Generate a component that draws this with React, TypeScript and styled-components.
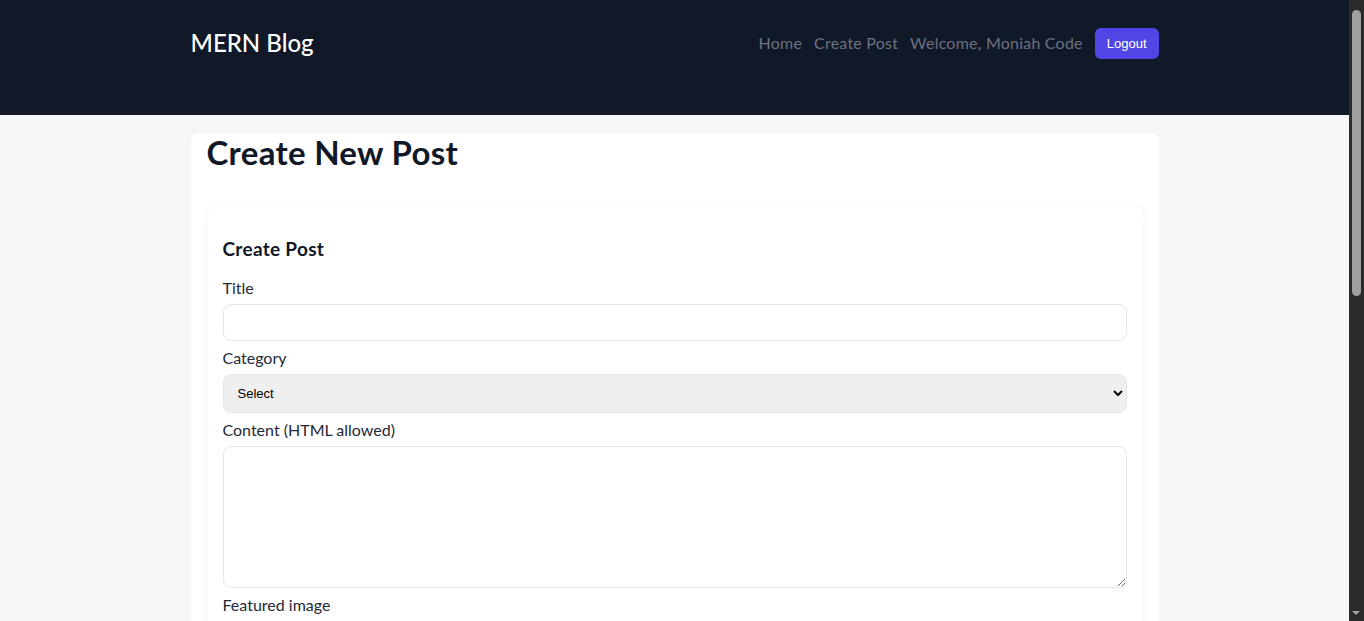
import React from "react";
import styled, { createGlobalStyle } from "styled-components";

const Global = createGlobalStyle`
  body {
    margin: 0;
    padding-right: 15px;
    background: #f5f6f8;
    font-family: Lato, "Open Sans", sans-serif;
    color: #111827;
  }
  * { box-sizing: border-box; }
`;

const ScrollTrack = styled.div`
  position: fixed;
  top: 0;
  right: 0;
  width: 15px;
  height: 100vh;
  background: #2b2b2b;
  z-index: 10;
`;

const ScrollThumb = styled.div`
  position: absolute;
  top: 10px;
  left: 3px;
  width: 9px;
  height: 286px;
  border-radius: 5px;
  background: #9f9f9f;
`;

const ScrollArrow = styled.div`
  position: absolute;
  bottom: 6px;
  left: 3px;
  width: 0;
  height: 0;
  border-left: 4.5px solid transparent;
  border-right: 4.5px solid transparent;
  border-top: 4px solid #a3a3a3;
`;

const Header = styled.header`
  background: #111827;
  height: 115px;
  padding-top: 28px;
`;

const Container = styled.div`
  max-width: 1000px;
  margin: 0 auto;
  padding: 0 16px;
`;

const NavRow = styled(Container)`
  display: flex;
  align-items: center;
  justify-content: space-between;
  height: 31px;
`;

const Logo = styled.a`
  color: #ffffff;
  font-size: 24px;
  font-weight: 500;
  text-decoration: none;
  margin-top: -2px;
`;

const Nav = styled.nav`
  display: flex;
  align-items: center;
  gap: 12px;
`;

const NavLink = styled.a`
  color: #6b7280;
  font-size: 16px;
  letter-spacing: 0.22px;
  text-decoration: none;
  margin-top: -3px;
`;

const LogoutButton = styled.button`
  background: #4f46e5;
  color: #fff;
  border: none;
  border-radius: 6px;
  height: 31px;
  padding: 0 12px;
  font-family: "Liberation Sans", Arial, sans-serif;
  font-size: 13px;
  cursor: pointer;
`;

const Main = styled(Container)`
  padding-top: 18px;
`;

const Card = styled.section`
  background: #fff;
  border-radius: 8px;
  padding: 0 16px 16px;
`;

const PageTitle = styled.h1`
  margin: 0 0 34px;
  font-size: 33px;
  letter-spacing: 0.3px;
  font-weight: 700;
  line-height: 38px;
  color: #111827;
`;

const FormCard = styled.form`
  background: #fff;
  border-radius: 12px;
  box-shadow: 0 2px 12px rgba(0, 0, 0, 0.05);
  padding: 32px 16px 24px;
  display: flex;
  flex-direction: column;
`;

const FormTitle = styled.h3`
  margin: 0 0 10px;
  font-size: 19px;
  letter-spacing: 0.3px;
  font-weight: 700;
  line-height: 24px;
`;

const Label = styled.label`
  display: block;
  font-size: 16px;
  line-height: 20px;
  color: #1f2937;
  margin: 7px 0 6px;
`;

const Input = styled.input`
  width: 100%;
  height: 37px;
  border: 1px solid #e5e7eb;
  border-radius: 8px;
  padding: 0 10px;
  font-size: 14px;
  background: #fff;
`;

const Select = styled.select`
  width: 100%;
  height: 39px;
  border: 1px solid #e5e7eb;
  border-radius: 8px;
  padding: 0 10px;
  background: #efefef;
  font-family: "Liberation Sans", Arial, sans-serif;
  font-size: 13px;
  color: #000;
`;

const TextArea = styled.textarea`
  width: 100%;
  height: 142px;
  border: 1px solid #e5e7eb;
  border-radius: 8px;
  padding: 10px;
  resize: vertical;
  display: block;
  font-size: 14px;
`;

const FileInput = styled.input`
  font-family: "Liberation Sans", Arial, sans-serif;
  font-size: 13px;
  margin-top: 18px;
`;

const Submit = styled.button`
  align-self: flex-start;
  margin-top: 16px;
  background: #4f46e5;
  color: #fff;
  border: none;
  border-radius: 6px;
  height: 36px;
  padding: 0 16px;
  font-size: 14px;
`;

export default function App() {
  return (
    <>
      <Global />
      <ScrollTrack>
        <ScrollThumb />
        <ScrollArrow />
      </ScrollTrack>
      <Header>
        <NavRow>
          <Logo href="#">MERN Blog</Logo>
          <Nav>
            <NavLink href="#">Home</NavLink>
            <NavLink href="#">Create Post</NavLink>
            <NavLink as="span">Welcome, Moniah Code</NavLink>
            <LogoutButton>Logout</LogoutButton>
          </Nav>
        </NavRow>
      </Header>
      <Main>
        <Card>
          <PageTitle>Create New Post</PageTitle>
          <FormCard onSubmit={(e) => e.preventDefault()}>
            <FormTitle>Create Post</FormTitle>
            <Label>Title</Label>
            <Input type="text" />
            <Label>Category</Label>
            <Select defaultValue="">
              <option value="">Select</option>
              <option value="tech">Tech</option>
            </Select>
            <Label>Content (HTML allowed)</Label>
            <TextArea />
            <Label>Featured image</Label>
            <FileInput type="file" />
            <Submit type="submit">Create</Submit>
          </FormCard>
        </Card>
      </Main>
    </>
  );
}
